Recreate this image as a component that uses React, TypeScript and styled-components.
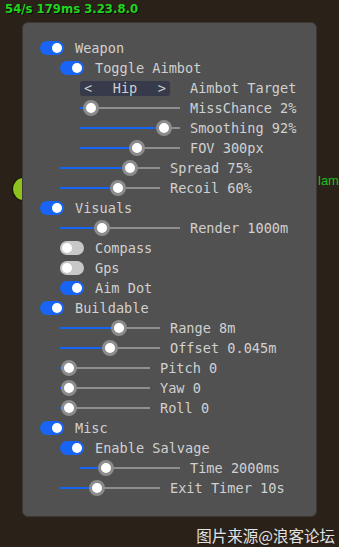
import React from "react";
import styled, { createGlobalStyle } from "styled-components";

const Global = createGlobalStyle`
  html, body { margin: 0; padding: 0; }
  body {
    background: #2a2119;
    width: 339px;
    height: 547px;
    overflow: hidden;
    font-family: "DejaVu Sans Mono", "Liberation Mono", monospace;
  }
`;

const Scene = styled.div`
  position: relative;
  width: 339px;
  height: 547px;
  overflow: hidden;
`;

const Stats = styled.div`
  height: 22px;
  padding-left: 5px;
  font-family: "DejaVu Sans", Verdana, sans-serif;
  font-weight: bold;
  font-size: 11.7px;
  line-height: 19px;
  color: #1fd41f;
  text-shadow: 1px 1px 0 #0b0a06;
`;

const Blob = styled.div`
  position: absolute;
  left: 12px;
  top: 177px;
  width: 20px;
  height: 22px;
  border-radius: 50%;
  background: #8ec21c;
  border: 1px solid #0f0d08;
`;

const FarText = styled.div`
  position: absolute;
  left: 318px;
  top: 173px;
  font-family: "Liberation Sans", sans-serif;
  font-size: 13px;
  color: #1fbf1f;
`;

const Panel = styled.div`
  position: relative;
  z-index: 1;
  margin-left: 22px;
  width: 295px;
  height: 495px;
  box-sizing: border-box;
  background: #515151;
  border: 1px solid #3b3836;
  border-radius: 6px;
  padding-top: 15px;
`;

const Row = styled.div<{ $level: number }>`
  display: flex;
  align-items: center;
  height: 20px;
  padding-left: ${(p) => 17 + p.$level * 20}px;
  font-size: 13.6px;
  color: #d0d0d0;
  white-space: nowrap;
`;

const Track = styled.div<{ $on: boolean }>`
  position: relative;
  width: 24px;
  height: 14px;
  border-radius: 7px;
  background: ${(p) => (p.$on ? "#1764f5" : "#c8c8c8")};
  flex: none;
`;

const Knob = styled.div<{ $on: boolean }>`
  position: absolute;
  top: 2px;
  left: ${(p) => (p.$on ? "12px" : "2px")};
  width: 10px;
  height: 10px;
  border-radius: 50%;
  background: #ffffff;
`;

const Label = styled.span<{ $gap: number }>`
  margin-left: ${(p) => p.$gap}px;
  line-height: 20px;
`;

const SliderBox = styled.div<{ $w: number }>`
  position: relative;
  width: ${(p) => p.$w}px;
  height: 16px;
  flex: none;
`;

const Line = styled.div`
  position: absolute;
  left: 0;
  right: 0;
  top: 7px;
  height: 2px;
  background: #8e8e8e;
`;

const Fill = styled.div`
  position: absolute;
  left: 0;
  top: 7px;
  height: 2px;
  background: #1764f5;
`;

const Thumb = styled.div`
  position: absolute;
  top: 0;
  width: 16px;
  height: 16px;
  box-sizing: border-box;
  border-radius: 50%;
  background: #ffffff;
  border: 3px solid #8c8c8c;
`;

const Selector = styled.div`
  display: flex;
  align-items: center;
  justify-content: space-between;
  width: 90px;
  height: 15px;
  box-sizing: border-box;
  padding: 0 4px;
  background: #363a4a;
  border-radius: 3px;
  font-size: 13.6px;
  color: #d0d0d0;
`;

const Watermark = styled.div`
  position: absolute;
  right: 4px;
  top: 524px;
  font-family: "Noto Sans CJK SC", sans-serif;
  font-size: 15.5px;
  color: #e2e2e2;
`;

type Item =
  | { kind: "toggle"; level: number; label: string; on: boolean }
  | { kind: "slider"; level: number; label: string; width: number; knob: number }
  | { kind: "select"; level: number; label: string; value: string };

const items: Item[] = [
  { kind: "toggle", level: 0, label: "Weapon", on: true },
  { kind: "toggle", level: 1, label: "Toggle Aimbot", on: true },
  { kind: "select", level: 2, label: "Aimbot Target", value: "Hip" },
  { kind: "slider", level: 2, label: "MissChance 2%", width: 100, knob: 10.5 },
  { kind: "slider", level: 2, label: "Smoothing 92%", width: 100, knob: 84 },
  { kind: "slider", level: 2, label: "FOV 300px", width: 100, knob: 57 },
  { kind: "slider", level: 1, label: "Spread 75%", width: 100, knob: 70 },
  { kind: "slider", level: 1, label: "Recoil 60%", width: 100, knob: 58 },
  { kind: "toggle", level: 0, label: "Visuals", on: true },
  { kind: "slider", level: 1, label: "Render 1000m", width: 120, knob: 42 },
  { kind: "toggle", level: 1, label: "Compass", on: false },
  { kind: "toggle", level: 1, label: "Gps", on: false },
  { kind: "toggle", level: 1, label: "Aim Dot", on: true },
  { kind: "toggle", level: 0, label: "Buildable", on: true },
  { kind: "slider", level: 1, label: "Range 8m", width: 100, knob: 59 },
  { kind: "slider", level: 1, label: "Offset 0.045m", width: 100, knob: 50 },
  { kind: "slider", level: 1, label: "Pitch 0", width: 90, knob: 9 },
  { kind: "slider", level: 1, label: "Yaw 0", width: 90, knob: 9 },
  { kind: "slider", level: 1, label: "Roll 0", width: 90, knob: 9 },
  { kind: "toggle", level: 0, label: "Misc", on: true },
  { kind: "toggle", level: 1, label: "Enable Salvage", on: true },
  { kind: "slider", level: 2, label: "Time 2000ms", width: 100, knob: 26 },
  { kind: "slider", level: 1, label: "Exit Timer 10s", width: 100, knob: 37 },
];

function Slider({ width, knob }: { width: number; knob: number }) {
  return (
    <SliderBox $w={width}>
      <Line />
      <Fill style={{ width: `${knob}px` }} />
      <Thumb style={{ left: `${knob - 8}px` }} />
    </SliderBox>
  );
}

export default function App() {
  return (
    <Scene>
      <Global />
      <Stats>54/s 179ms 3.23.8.0</Stats>
      <Blob />
      <FarText>lam</FarText>
      <Panel>
        {items.map((it, i) => (
          <Row key={i} $level={it.level}>
            {it.kind === "toggle" && (
              <>
                <Track $on={it.on}>
                  <Knob $on={it.on} />
                </Track>
                <Label $gap={11}>{it.label}</Label>
              </>
            )}
            {it.kind === "slider" && (
              <>
                <Slider width={it.width} knob={it.knob} />
                <Label $gap={10}>{it.label}</Label>
              </>
            )}
            {it.kind === "select" && (
              <>
                <Selector>
                  <span>&lt;</span>
                  <span>{it.value}</span>
                  <span>&gt;</span>
                </Selector>
                <Label $gap={20}>{it.label}</Label>
              </>
            )}
          </Row>
        ))}
      </Panel>
      <Watermark>图片来源@浪客论坛</Watermark>
    </Scene>
  );
}
